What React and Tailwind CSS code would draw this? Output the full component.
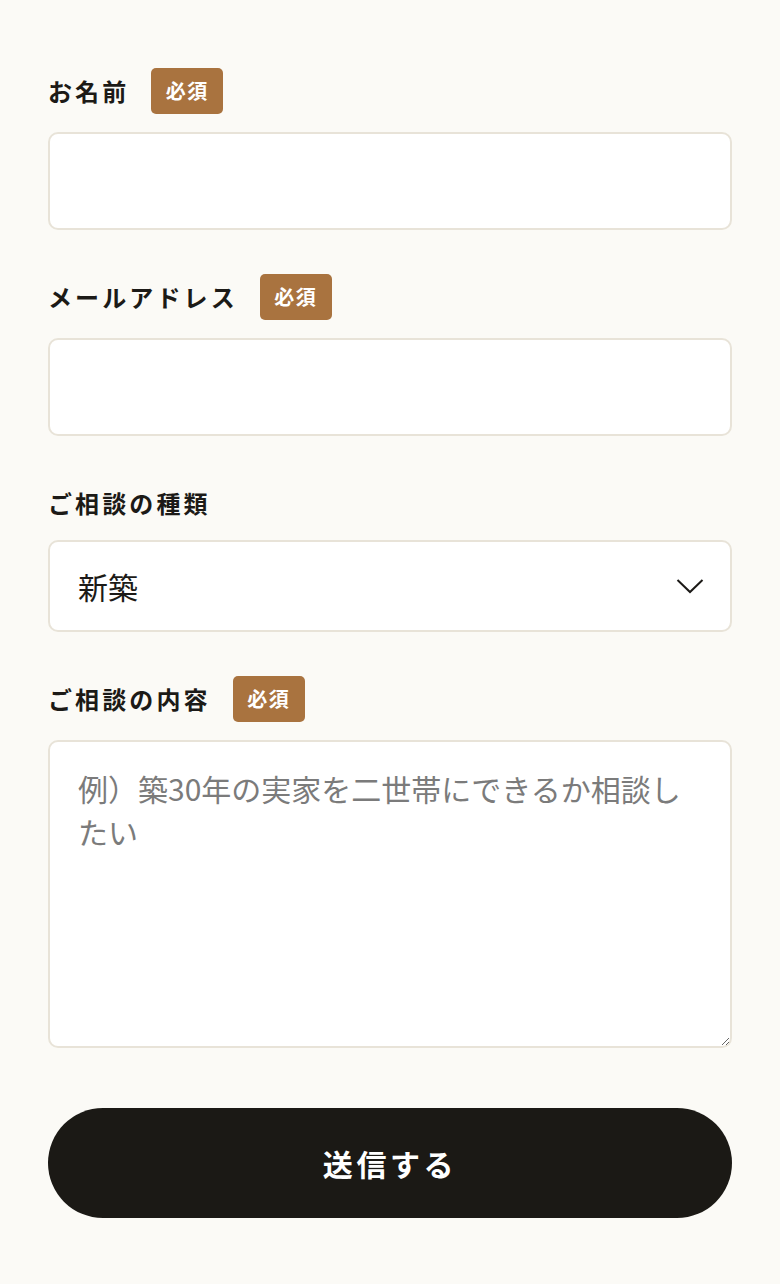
import React from "react";

const font = { fontFamily: '"Noto Sans CJK JP", "Noto Sans", sans-serif' };

function Badge() {
  return (
    <span className="inline-flex items-center justify-center w-[72px] h-[46px] rounded-[5px] bg-[#a9733f] text-white text-[20px] font-bold tracking-[0.08em] leading-none">
      必須
    </span>
  );
}

function Label({ children, required, mb = "mb-[18px]" }) {
  return (
    <div className={`flex items-center h-[46px] gap-[22px] ${mb}`}>
      <span className="text-[24px] font-bold tracking-[0.13em] text-[#1c1a17] leading-none">
        {children}
      </span>
      {required && <Badge />}
    </div>
  );
}

export default function App() {
  return (
    <div className="min-h-[1284px] w-full bg-[#fbfaf6]" style={font}>
      <form className="px-12 pt-[68px] pb-[66px] flex flex-col" onSubmit={(e) => e.preventDefault()}>
        <div className="flex flex-col">
          <Label required>お名前</Label>
          <input
            type="text"
            className="h-[98px] w-full rounded-[10px] border-2 border-[#e8e3d8] bg-white px-[28px] text-[30px] text-[#222] outline-none"
          />
        </div>

        <div className="flex flex-col mt-[44px]">
          <Label required>メールアドレス</Label>
          <input
            type="email"
            className="h-[98px] w-full rounded-[10px] border-2 border-[#e8e3d8] bg-white px-[28px] text-[30px] text-[#222] outline-none"
          />
        </div>

        <div className="flex flex-col mt-[44px]">
          <Label mb="mb-[14px]">ご相談の種類</Label>
          <div className="relative">
            <select
              defaultValue="新築"
              className="appearance-none h-[92px] w-full rounded-[10px] border-2 border-[#e8e3d8] bg-white pl-[28px] pr-[80px] text-[30px] text-[#1c1a17] outline-none"
              style={font}
            >
              <option>新築</option>
              <option>リフォーム</option>
              <option>その他</option>
            </select>
            <svg
              className="pointer-events-none absolute right-[28px] top-1/2 -translate-y-1/2"
              width="28"
              height="16"
              viewBox="0 0 28 16"
              fill="none"
            >
              <path d="M1.5 2 L14 14 L26.5 2" stroke="#1c1a17" strokeWidth="2" />
            </svg>
          </div>
        </div>

        <div className="flex flex-col mt-[44px]">
          <Label required>ご相談の内容</Label>
          <textarea
            placeholder="例）築30年の実家を二世帯にできるか相談したい"
            className="h-[308px] w-full rounded-[10px] border-2 border-[#e8e3d8] bg-white px-[28px] pt-[25px] text-[30px] leading-[43px] text-[#222] placeholder:text-[#7b7b7b] outline-none"
            style={font}
          />
        </div>

        <button
          type="submit"
          className="mt-[60px] h-[110px] w-full rounded-full bg-[#1b1915] text-white text-[30px] font-bold tracking-[0.12em]"
          style={font}
        >
          送信する
        </button>
      </form>
    </div>
  );
}
